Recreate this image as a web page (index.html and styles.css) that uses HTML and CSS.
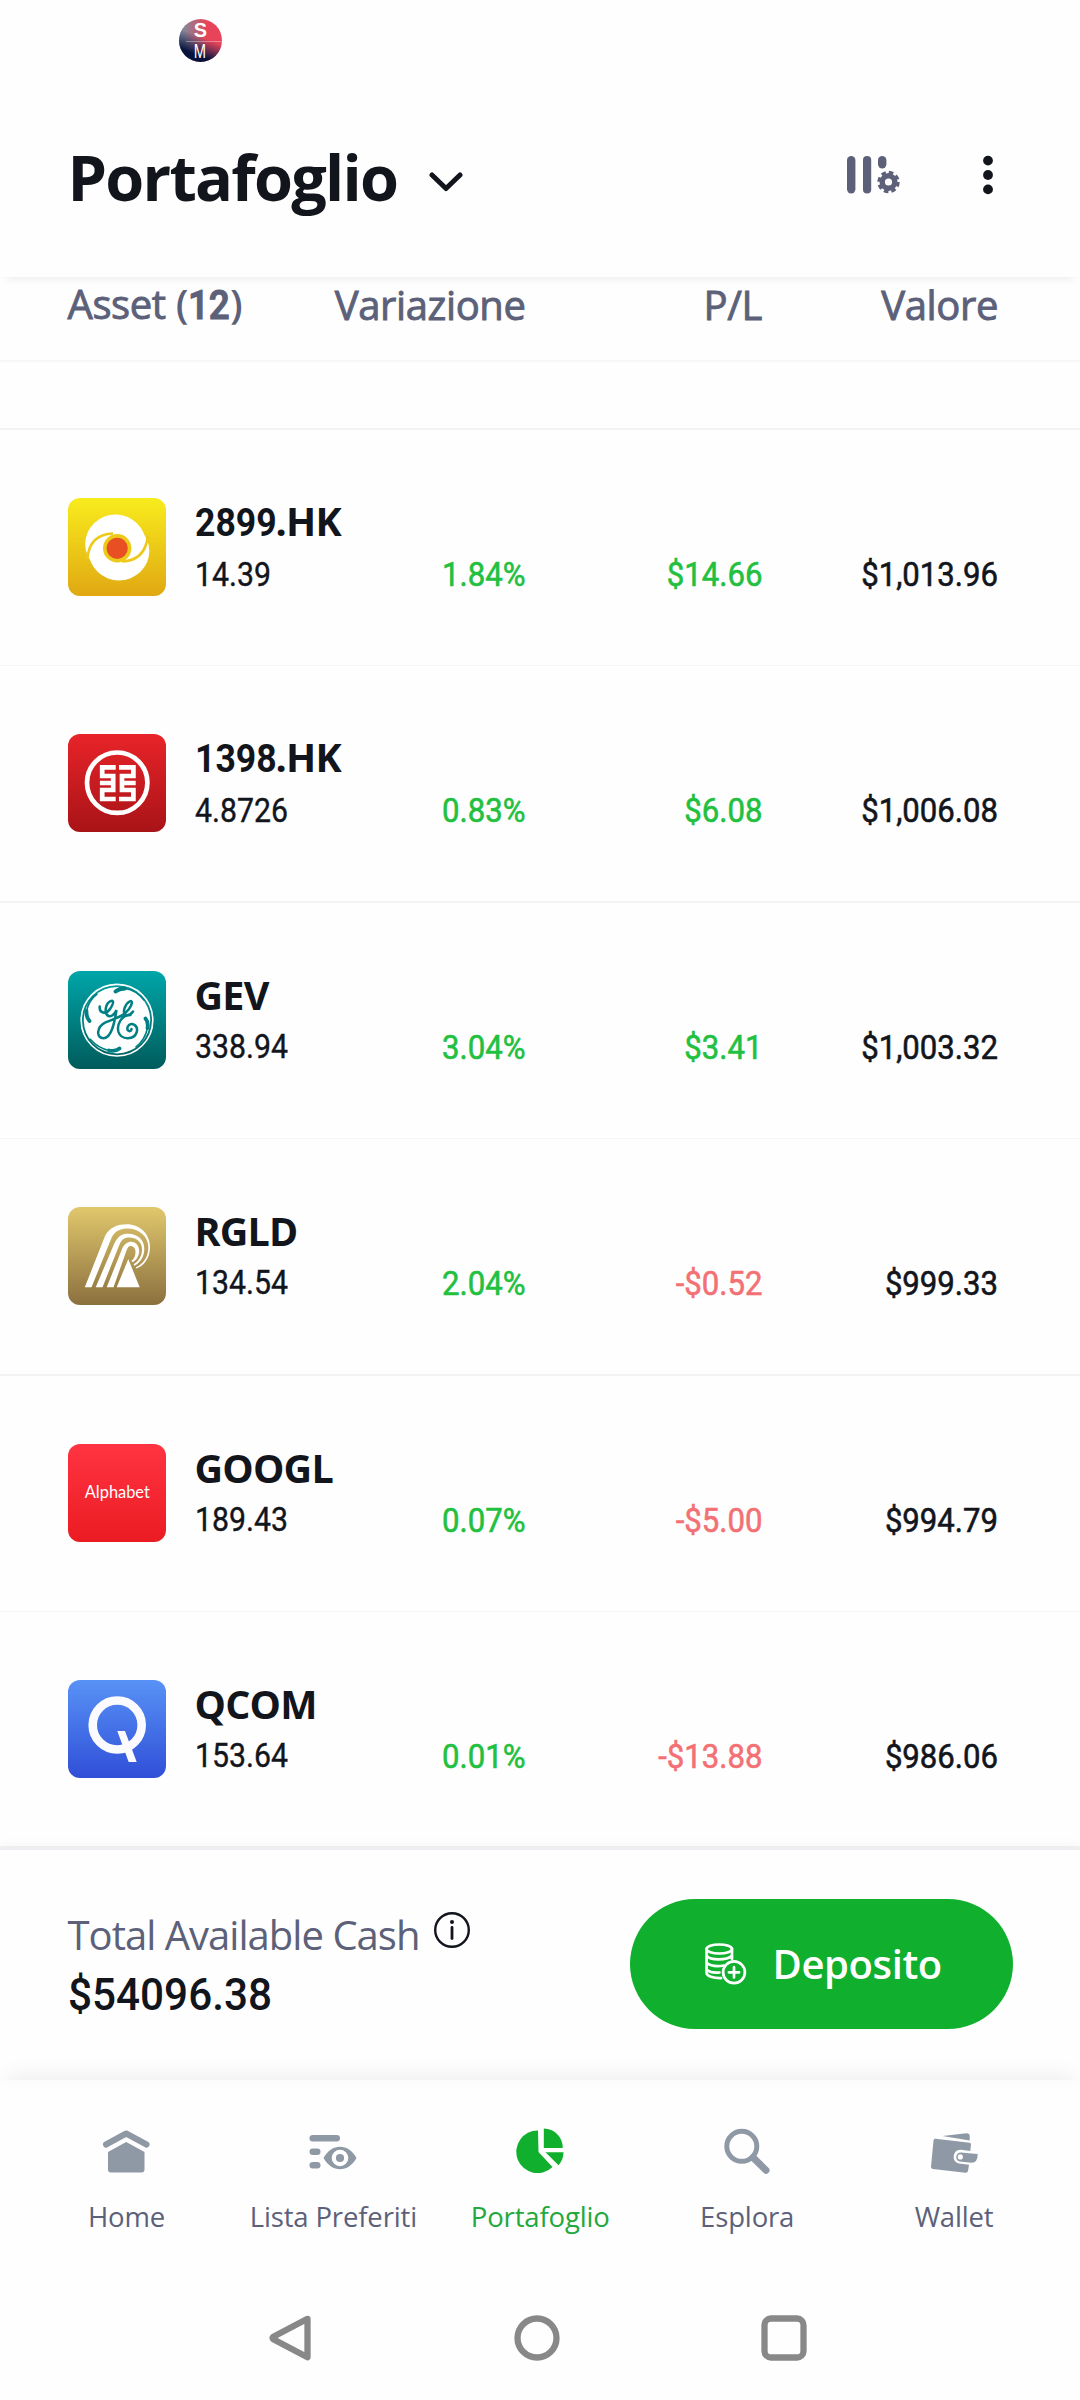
FILE: index.html
```
<!DOCTYPE html>
<html lang="it">
<head>
  <meta charset="UTF-8">
  <title>Portafoglio</title>
  <link rel="stylesheet" href="styles.css">
</head>
<body>
  <div class="status-bar">
    <svg class="avatar" viewBox="0 0 42 42">
      <defs>
        <linearGradient id="avatar-top" x1="0" x2="1"><stop offset="0.1" stop-color="#84889a"/><stop offset="0.65" stop-color="#e84459"/></linearGradient>
        <linearGradient id="avatar-fade" x1="0.65" y1="0.1" x2="0.3" y2="1"><stop offset="0.35" stop-color="#0b1b4d" stop-opacity="0"/><stop offset="0.8" stop-color="#07133d"/></linearGradient>
      </defs>
      <circle cx="21" cy="21" r="21" fill="url(#avatar-top)"/>
      <circle cx="21" cy="21" r="21" fill="url(#avatar-fade)"/>
      <path d="M7 22H42" stroke="#fff" stroke-width="0.5" opacity="0.7"/>
      <text class="avatar-s" x="21" y="17.3" text-anchor="middle" textLength="13" lengthAdjust="spacingAndGlyphs">S</text>
      <text class="avatar-m" x="20.5" y="38.5" text-anchor="middle" textLength="12" lengthAdjust="spacingAndGlyphs">M</text>
    </svg>
  </div>

  <header class="header">
    <h1>Portafoglio</h1>
    <svg class="chevron" width="34" height="20" viewBox="0 0 34 20"><path d="M3 3L17 16.5L31 3"/></svg>
    <div class="header-actions">
      <svg width="54" height="38" viewBox="0 0 54 38" fill="#5c6179">
        <rect x="0" y="0" width="8.4" height="37.5" rx="4.2"/>
        <rect x="16" y="0" width="8.2" height="37.5" rx="4.1"/>
        <rect x="31" y="0" width="8.4" height="12.5" rx="4.2"/>
        <circle cx="41.5" cy="26" r="6.3" fill="none" stroke="#5c6179" stroke-width="5.4"/>
        <circle cx="41.5" cy="26" r="9.7" fill="none" stroke="#5c6179" stroke-width="3" stroke-dasharray="4.6 3.02"/>
      </svg>
      <svg width="12" height="40" viewBox="0 0 12 40" fill="#12151c">
        <circle cx="6" cy="5.6" r="4.9"/><circle cx="6" cy="20" r="4.9"/><circle cx="6" cy="34.4" r="4.9"/>
      </svg>
    </div>
  </header>

  <main class="portfolio">
    <div class="table-head">
      <span class="first">Asset <b>(</b><span class="count">12</span><b>)</b></span>
      <span>Variazione</span>
      <span>P/L</span>
      <span>Valore</span>
    </div>
    <div class="partial-row"></div>

    <div class="row">
      <svg class="logo" viewBox="0 0 98 98">
        <defs><linearGradient id="g-yellow" x2="0" y2="1"><stop stop-color="#f8ec1d"/><stop offset="1" stop-color="#e0a812"/></linearGradient></defs>
        <rect width="98" height="98" rx="12" fill="url(#g-yellow)"/>
        <ellipse cx="47.5" cy="46" rx="30.3" ry="29.5" fill="#fff"/>
        <ellipse cx="51" cy="53" rx="30.3" ry="29.5" fill="#fff"/>
        <path d="M19.5 60C21 44 30 36 45 35.5M80 38C78 54 69 63 54 63.5" fill="none" stroke="#edc91a" stroke-width="2.6"/>
        <circle cx="49.2" cy="50.3" r="12.4" fill="#e84f22" stroke="#edc91a" stroke-width="3.6"/>
      </svg>
      <div class="asset"><strong><span class="digits">2899</span>.HK</strong><span class="price">14.39</span></div>
      <span class="value up">1.84%</span>
      <span class="value up">$14.66</span>
      <span class="value">$1,013.96</span>
    </div>

    <div class="row">
      <svg class="logo" viewBox="0 0 98 98">
        <defs><linearGradient id="g-red" x2="0" y2="1"><stop stop-color="#e82429"/><stop offset="1" stop-color="#a81317"/></linearGradient></defs>
        <rect width="98" height="98" rx="12" fill="url(#g-red)"/>
        <g fill="none" stroke="#fff" stroke-width="4.7">
          <circle cx="49.2" cy="48.7" r="30.2"/>
          <path d="M47.7 33.4H34.2V42H45.2V56H34.2V65H47.7M31.9 49H45.2M51 33.4H65.4V42H54V56H65.4V65H51M54 49H67.7"/>
        </g>
      </svg>
      <div class="asset"><strong><span class="digits">1398</span>.HK</strong><span class="price">4.8726</span></div>
      <span class="value up">0.83%</span>
      <span class="value up">$6.08</span>
      <span class="value">$1,006.08</span>
    </div>

    <div class="row">
      <svg class="logo" viewBox="0 0 98 98">
        <defs><linearGradient id="g-teal" x2="0" y2="1"><stop stop-color="#00a6a9"/><stop offset="1" stop-color="#005b5b"/></linearGradient></defs>
        <rect width="98" height="98" rx="12" fill="url(#g-teal)"/>
        <circle cx="49" cy="49.2" r="35.8" fill="none" stroke="#fff" stroke-width="1.6"/>
        <circle cx="49" cy="49.2" r="33.2" fill="#fff"/>
        <g fill="none" stroke="#008084" stroke-linecap="round">
          <path d="M47.5 20.5Q51 17.5 57 17.5M21.5 50Q18 46 18.5 40M77.5 47.5Q80.5 51 79.5 57M51.5 77.5Q47 81 41 79.5" stroke-width="3.8"/>
          <path d="M57 17.5Q68 19 76 29M18.5 40Q21 29 29 23M79.5 57Q77 69 68 76M41 79.5Q30 77 22 68" stroke-width="1.6"/>
          <path d="M31.7 35.5C31 42 38 44 42 38C46 32 46 28.5 42.5 30.2C37 33 36 43 40.5 45C44 46 47 42 48.5 39C47 49 44 67 35.5 67.2C28 67.2 28 56 38 51.2C48 47 56 45 61 38C65 32 64.5 29 61.5 30.5C57 33 54 42 57.5 44C61 45 64 42 65 40.5M62.5 44C53 44 48.5 54 50.5 61C53 69 66 69.5 68.8 61C70.5 53.5 62.5 50.5 59.8 55.5C58 60 63 62 63.5 58" stroke-width="2.5"/>
        </g>
      </svg>
      <div class="asset"><strong>GEV</strong><span class="price">338.94</span></div>
      <span class="value up">3.04%</span>
      <span class="value up">$3.41</span>
      <span class="value">$1,003.32</span>
    </div>

    <div class="row">
      <svg class="logo" viewBox="0 0 98 98">
        <defs><linearGradient id="g-gold" x2="0" y2="1"><stop stop-color="#e1c86c"/><stop offset="1" stop-color="#8b703f"/></linearGradient></defs>
        <rect width="98" height="98" rx="12" fill="url(#g-gold)"/>
        <g fill="#fff">
          <path d="M16.8 80.3L37 29C42 20 50 17.3 58.7 17.3C72 17.3 82 27 82 40C82 51 76 59 68.3 61.5L67.8 60.3C75 57 80.5 50 80.3 40C80 29 71 21.5 59 21.5C51 21.5 46.5 25 43.5 31L23.5 80.3Z"/>
          <path d="M27.7 80.3L46.5 36C50 29 54 26.7 60 26.7C70 26.7 76.3 33 76.3 42C76.3 50 72 56 66.5 58.7L65.5 57.3C71 54 74 49 74 42C74 35 68.5 30.5 61 30.5C56 30.5 53.5 33 51.5 37.5L34.5 80.3Z"/>
          <path d="M38.7 80.3L54 42C56 37 60 34.7 63 34.7C68 34.7 71.2 39 71.2 44C71.2 49.5 68 53.5 64.5 55.3L63.5 53.8C66 52 67.5 49 67.5 45C67.5 41 65 39 62.5 39C60.5 39 59.5 41 58.5 43.5L45.5 80.3Z"/>
          <path d="M60.3 52L71.7 80.3H48.7Z"/>
        </g>
      </svg>
      <div class="asset"><strong>RGLD</strong><span class="price">134.54</span></div>
      <span class="value up">2.04%</span>
      <span class="value down">-$0.52</span>
      <span class="value">$999.33</span>
    </div>

    <div class="row">
      <svg class="logo" viewBox="0 0 98 98">
        <defs><linearGradient id="g-alpha" x2="0" y2="1"><stop stop-color="#ff3442"/><stop offset="1" stop-color="#eb1b22"/></linearGradient></defs>
        <rect width="98" height="98" rx="12" fill="url(#g-alpha)"/>
        <text class="alphabet" x="49.3" y="53.5" text-anchor="middle" textLength="65" lengthAdjust="spacingAndGlyphs">Alphabet</text>
      </svg>
      <div class="asset"><strong>GOOGL</strong><span class="price">189.43</span></div>
      <span class="value up">0.07%</span>
      <span class="value down">-$5.00</span>
      <span class="value">$994.79</span>
    </div>

    <div class="row">
      <svg class="logo" viewBox="0 0 98 98">
        <defs><linearGradient id="g-blue" x2="0" y2="1"><stop stop-color="#5892f6"/><stop offset="1" stop-color="#304fd8"/></linearGradient></defs>
        <rect width="98" height="98" rx="12" fill="url(#g-blue)"/>
        <circle cx="49.2" cy="45" r="24.5" fill="none" stroke="#fafaff" stroke-width="8.6"/>
        <path d="M49.3 51H57L68.7 82H60.7Z" fill="#fafaff"/>
      </svg>
      <div class="asset"><strong>QCOM</strong><span class="price">153.64</span></div>
      <span class="value up">0.01%</span>
      <span class="value down">-$13.88</span>
      <span class="value">$986.06</span>
    </div>
  </main>

  <section class="cash">
    <div class="cash-info">
      <div class="cash-label">
        <span>Total Available Cash</span>
        <svg class="info" width="36" height="36" viewBox="0 0 36 36">
          <circle cx="18" cy="18" r="16.8" fill="none" stroke="#12151c" stroke-width="2.4"/>
          <circle cx="18" cy="10" r="2" fill="#12151c"/>
          <path d="M18 15.5V26.5" stroke="#12151c" stroke-width="2.8" stroke-linecap="round"/>
        </svg>
      </div>
      <div class="cash-amount">$54096.38</div>
    </div>
    <button class="deposit">
      <svg width="42" height="42" viewBox="0 0 42 42" fill="none" stroke="#fff" stroke-width="2.7" stroke-linecap="round">
        <ellipse cx="14.3" cy="6" rx="12.7" ry="4.5"/>
        <path d="M1.6 6V30C1.6 33 8 35.4 16 35.2M27 6V16M2 13C5 17.5 22 17.5 26.5 13M2 20C6 23.5 13 23.5 19 22.5M2 27C5 29.5 10 30 14.5 29.5"/>
        <circle cx="29" cy="29.3" r="10.9"/>
        <path d="M29 24.2V34.4M23.9 29.3H34.1"/>
      </svg>
      <span>Deposito</span>
    </button>
  </section>

  <nav class="tabs">
    <a class="tab">
      <svg width="48" height="48" viewBox="0 0 48 48" fill="#8f99a5">
        <path d="M4 17.5L24.2 6.5L44.5 17.5" fill="none" stroke="#8f99a5" stroke-width="6" stroke-linecap="round" stroke-linejoin="round"/>
        <path d="M24.2 15L42.5 25V42.5Q42.5 45.5 39.5 45.5H9Q6 45.5 6 42.5V25Z"/>
      </svg>
      <span>Home</span>
    </a>
    <a class="tab">
      <svg width="48" height="48" viewBox="0 0 48 48" fill="#8f99a5">
        <rect x="0.5" y="8" width="30.5" height="6.6" rx="3.3"/>
        <rect x="0.5" y="21.5" width="11" height="6.6" rx="3.3"/>
        <rect x="0.5" y="35" width="11" height="6.6" rx="3.3"/>
        <path d="M14.5 31C19 23.5 24.5 19.8 31 19.8S43 23.5 47.5 31C43 38.5 37.5 42.2 31 42.2S19 38.5 14.5 31Z"/>
        <circle cx="31" cy="31" r="6.2" fill="none" stroke="#fff" stroke-width="4.2"/>
      </svg>
      <span>Lista Preferiti</span>
    </a>
    <a class="tab active">
      <svg width="48" height="48" viewBox="0 0 48 48" fill="#10b02e">
        <path d="M22 3.5A21.3 21.3 0 1 0 36.5 40L22.5 25Z"/>
        <path d="M27.8 1.5V21H46.8C46.8 10 38.5 1.5 27.8 1.5Z"/>
        <path d="M29.5 25.3H47.5C47.5 30.5 45.5 35 42.5 38.3Z"/>
      </svg>
      <span>Portafoglio</span>
    </a>
    <a class="tab">
      <svg width="48" height="48" viewBox="0 0 48 48" fill="none" stroke="#8f99a5" stroke-linecap="round">
        <circle cx="18.8" cy="19.3" r="15" stroke-width="5"/>
        <path d="M30 30.5L43 43.2" stroke-width="7"/>
      </svg>
      <span>Esplora</span>
    </a>
    <a class="tab">
      <svg width="48" height="48" viewBox="0 0 48 48" fill="#8f99a5">
        <path d="M12.5 9L36.5 6.2Q39.5 6 39.7 9V13.5Z"/>
        <path d="M5.5 11.7L39.5 15.7Q41 16 41 17.5L40.3 24L31 22.8C23 22 20.5 34.5 29 36.5L39 37.8L38 44Q37.5 46 35.5 45.8L2.8 42Q0.8 41.7 1 39.7L3.5 13.5Q3.8 11.5 5.5 11.7Z"/>
        <path d="M31 25.5L39 26.3L47.7 27Q47.7 35.8 41.5 35.8L29.5 34.6C24.5 33 25.5 25.3 31 25.5ZM30.3 27.3A2.6 2.6 0 1 0 30.3 32.5A2.6 2.6 0 1 0 30.3 27.3Z" fill-rule="evenodd"/>
      </svg>
      <span>Wallet</span>
    </a>
  </nav>

  <div class="system-nav">
    <svg width="46" height="46" viewBox="0 0 46 46"><path d="M39.5 3.8L5.3 21.8Q4.1 23 5.3 24.2L39.5 42.2Z"/></svg>
    <svg width="46" height="46" viewBox="0 0 46 46"><circle cx="23" cy="23" r="19.5"/></svg>
    <svg width="46" height="46" viewBox="0 0 46 46"><rect x="3.5" y="3.5" width="39" height="39" rx="6.5"/></svg>
  </div>
</body>
</html>
```

FILE: styles.css
```
* {
  box-sizing: border-box;
}

body {
  margin: 0;
  width: 1080px;
  height: 2400px;
  overflow: hidden;
  background-color: #fefefe;
  color: #12151c;
  font-family: "Open Sans", "Noto Sans", sans-serif;
}

svg {
  display: block;
  flex-shrink: 0;
}

.status-bar {
  height: 76px;
  padding: 19px 0 0 179px;
}

.avatar {
  width: 43px;
  height: 43px;
}

.avatar text {
  fill: #fff;
  font-family: "Liberation Sans", sans-serif;
}

.avatar-s {
  font-size: 19px;
  font-weight: bold;
}

.avatar-m {
  font-size: 19px;
}

/* Header */
.header {
  display: flex;
  align-items: center;
  height: 201px;
  padding: 0 87px 0 67.5px;
  box-shadow: 0 8px 8px -6px rgba(0, 0, 0, 0.07);
}

h1 {
  margin: 0;
  font-size: 63px;
  line-height: 86px;
  font-weight: 700;
  letter-spacing: -1.75px;
}

.chevron {
  margin: 10px 0 0 32px;
}

.chevron path {
  fill: none;
  stroke: #12151c;
  stroke-width: 5;
  stroke-linecap: round;
  stroke-linejoin: round;
}

.header-actions {
  display: flex;
  align-items: center;
  gap: 81px;
  margin: 0 -1px 4px auto;
}

/* Portfolio table */
.table-head,
.row {
  display: grid;
  grid-template-columns: 257.5px 200.5px 236.5px 236px;
  align-items: center;
  padding: 0 82px 0 67.5px;
}

.table-head {
  height: 85px;
  padding-bottom: 29px;
  border-bottom: 2px solid #f7f7f8;
  color: #5c6179;
  font-size: 40px;
  line-height: 54px;
  letter-spacing: -0.4px;
  text-align: right;
  -webkit-text-stroke: 0.9px #5c6179;
}

.table-head .first {
  text-align: left;
}

.table-head b {
  font-weight: 600;
  -webkit-text-stroke: 0;
}

.count {
  display: inline-block;
  width: 42px;
  font-family: Roboto, sans-serif;
  font-weight: 600;
  transform: scaleX(0.92);
  transform-origin: left;
}

.partial-row {
  height: 68px;
  border-bottom: 2px solid #f2f3f5;
}

.row {
  grid-template-columns: 127px 130.5px 200.5px 236.5px 236px;
  height: 236.4px;
  border-bottom: 1px solid #f6f6f7;
}

.row:nth-child(even) {
  border-bottom: 2px solid #f2f3f5;
}

.logo {
  width: 98px;
  height: 98px;
  margin-bottom: 1px;
}

.alphabet {
  fill: #fff;
  font-family: Lato, sans-serif;
  font-size: 17px;
}

.asset {
  display: flex;
  flex-direction: column;
  align-items: flex-start;
  white-space: nowrap;
}

.asset strong {
  font-size: 39.5px;
  line-height: 52px;
  letter-spacing: -0.8px;
}

/* Figures are set slightly condensed */
.digits,
.price,
.value,
.cash-amount {
  font-family: Roboto, sans-serif;
  font-weight: 500;
  transform-origin: left;
}

.digits {
  display: inline-block;
  width: 81px;
  font-weight: 700;
  letter-spacing: 0;
  transform: scaleX(0.9);
}

.price {
  font-size: 34px;
  line-height: 51px;
  font-weight: 400;
  -webkit-text-stroke: 0.4px;
  transform: scaleX(0.89);
}

.value {
  margin-top: 53px;
  font-size: 34px;
  line-height: 50px;
  font-weight: 400;
  text-align: right;
  -webkit-text-stroke: 0.6px;
  transform: scaleX(0.915);
  transform-origin: right;
}

.up {
  color: #22c03f;
}

.down {
  color: #f37074;
}

/* Cash bar */
.cash {
  display: flex;
  justify-content: space-between;
  align-items: center;
  height: 231.6px;
  padding: 0 67px 2px 67.5px;
  border-top: 2px solid #eceef1;
  box-shadow: 0 -2px 12px rgba(0, 0, 0, 0.04);
}

.cash-label {
  display: flex;
  align-items: center;
  padding-top: 2px;
  color: #5c6179;
  font-size: 40px;
  line-height: 60px;
  letter-spacing: -0.97px;
}

.info {
  margin: 0 0 10px 14px;
}

.cash-amount {
  font-size: 44.5px;
  line-height: 60px;
  transform: scaleX(0.95);
}

.deposit {
  display: flex;
  align-items: center;
  width: 383px;
  height: 130px;
  padding: 0 0 0 75px;
  border: none;
  border-radius: 65px;
  background-color: #10b02e;
  color: #fff;
  font: 600 40px "Open Sans", "Noto Sans", sans-serif;
  letter-spacing: -0.4px;
}

.deposit span {
  margin: 0 0 2px 25.5px;
}

/* Bottom tabs */
.tabs {
  display: flex;
  height: 196px;
  padding: 47.5px 22.5px 0 23px;
  box-shadow: 0 -10px 20px -6px rgba(0, 0, 0, 0.07);
}

.tab {
  flex: 1;
  display: flex;
  flex-direction: column;
  align-items: center;
  gap: 22.5px;
  color: #5c6179;
  font-size: 27.5px;
  line-height: 38px;
  letter-spacing: -0.15px;
  white-space: nowrap;
}

.tab.active {
  color: #22a83c;
}

.system-nav {
  display: flex;
  justify-content: center;
  align-items: center;
  gap: 200.5px;
  height: 124px;
  padding-right: 6px;
}

.system-nav svg {
  fill: none;
  stroke: #888;
  stroke-width: 6.3;
  stroke-linejoin: round;
}
```
